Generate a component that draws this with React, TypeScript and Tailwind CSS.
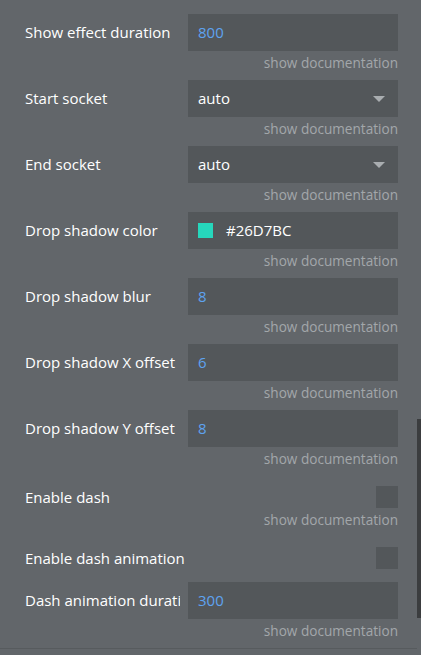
const rows: { label: string; kind: "num" | "select" | "color"; value: string }[] = [
  { label: "Show effect duration", kind: "num", value: "800" },
  { label: "Start socket", kind: "select", value: "auto" },
  { label: "End socket", kind: "select", value: "auto" },
  { label: "Drop shadow color", kind: "color", value: "#26D7BC" },
  { label: "Drop shadow blur", kind: "num", value: "8" },
  { label: "Drop shadow X offset", kind: "num", value: "6" },
  { label: "Drop shadow Y offset", kind: "num", value: "8" },
];

function Doc({ className = "" }: { className?: string }) {
  return (
    <div className={"h-[29px] text-right text-[13.6px] leading-[20px] text-[#a3a7aa] " + className}>
      show documentation
    </div>
  );
}

function Field({ kind, value }: { kind: string; value: string }) {
  return (
    <div className="flex h-[37px] flex-1 items-center bg-[#53575a] px-[10px]">
      {kind === "num" && <span className="text-[15px] text-[#5ea3f0]">{value}</span>}
      {kind === "select" && (
        <>
          <span className="flex-1 text-[15px] text-white">{value}</span>
          <svg width="12" height="6" viewBox="0 0 12 6" className="mr-[3px]">
            <path d="M0 0 H12 L6 6 Z" fill="#a9adb0" />
          </svg>
        </>
      )}
      {kind === "color" && (
        <>
          <span className="h-[15px] w-[15px] bg-[#26d7bc]" />
          <span className="ml-[13px] text-[15px] text-white">{value}</span>
        </>
      )}
    </div>
  );
}

function Label({ text }: { text: string }) {
  return (
    <div className="mr-[8px] w-[155px] overflow-hidden whitespace-nowrap text-[15px] text-white">{text}</div>
  );
}

export default function App() {
  return (
    <div className="relative h-[655px] w-[421px] overflow-hidden bg-[#62666a] font-['Open_Sans',sans-serif]">
      <div className="mt-[-15px] pl-[25px] pr-[23px]">
        <Doc />
        {rows.map((r) => (
          <div key={r.label}>
            <div className="flex items-center">
              <Label text={r.label} />
              <Field kind={r.kind} value={r.value} />
            </div>
            <Doc className="pt-[2px]" />
          </div>
        ))}

        <div className="mt-[10px] flex h-[22px] items-center justify-between">
          <div className="text-[15px] text-white">Enable dash</div>
          <span className="h-[22px] w-[22px] bg-[#53575a]" />
        </div>
        <Doc className="pt-[2px]" />

        <div className="mt-[10px] flex h-[22px] items-center justify-between">
          <div className="text-[15px] text-white">Enable dash animation</div>
          <span className="h-[22px] w-[22px] bg-[#53575a]" />
        </div>

        <div className="mt-[13px] flex items-center">
          <Label text="Dash animation duration" />
          <Field kind="num" value="300" />
        </div>
        <Doc className="pt-[2px]" />
      </div>
      <div className="mr-[4px] border-t border-[#575b5e]" />
      <div className="absolute right-0 top-[419px] h-[199px] w-[4px] bg-[#3b3d3f]" />
    </div>
  );
}
